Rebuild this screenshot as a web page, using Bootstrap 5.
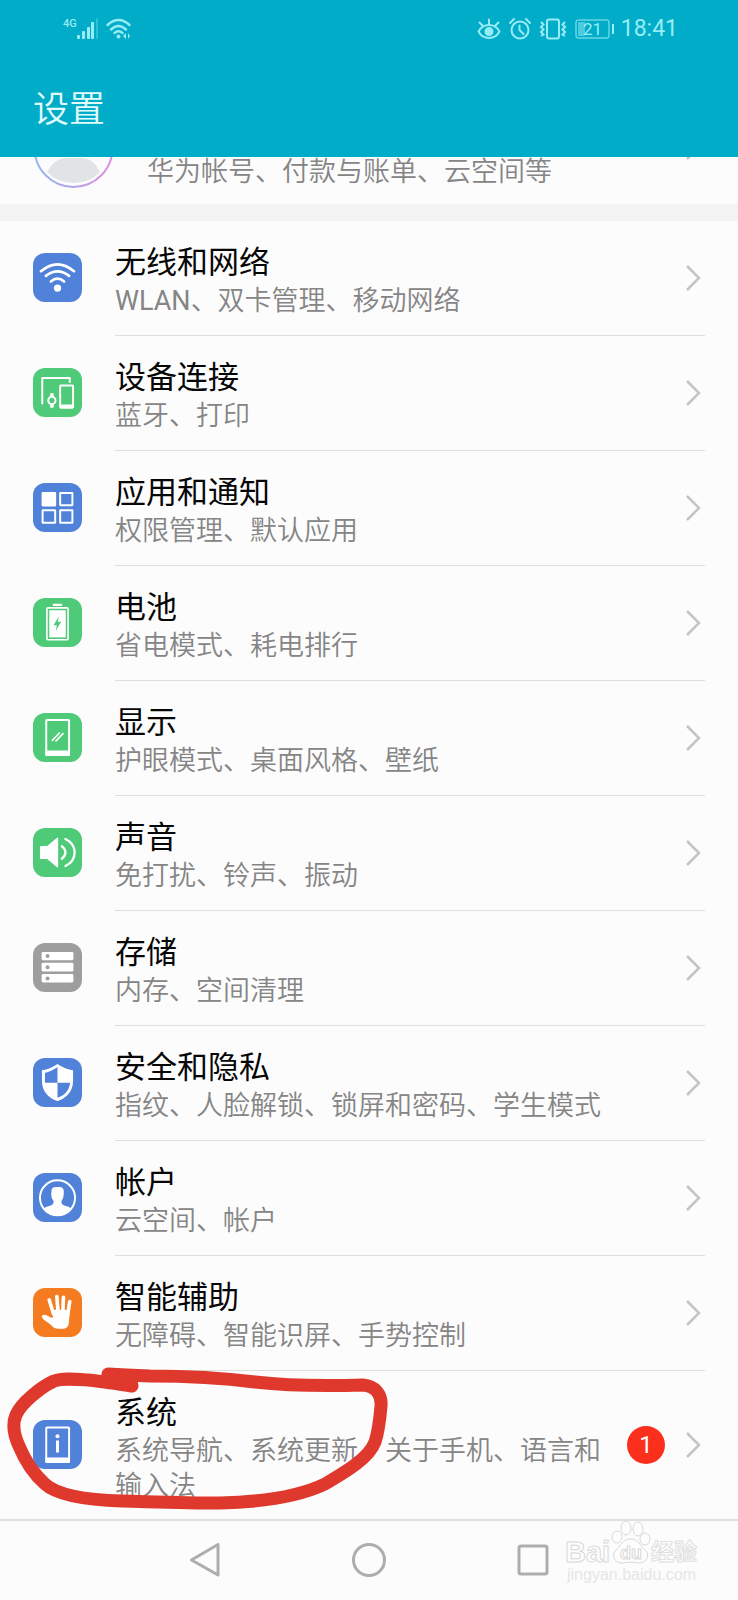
<!DOCTYPE html>
<html lang="zh-CN">
<head>
<meta charset="utf-8">
<meta name="viewport" content="width=device-width, initial-scale=1">
<title>设置</title>
<link href="https://cdn.jsdelivr.net/npm/bootstrap@5.3.0/dist/css/bootstrap.min.css" rel="stylesheet">
<style>
  body { background: #fcfcfc; color: #060606; font-family: Roboto, "Noto Sans CJK SC", sans-serif; }
  .page { min-height: 100vh; }
  .app-top { background: #00acc7; color: #e2fbfd; height: 157px; }
  .status { height: 58px; padding: 0 60px 0 63px; color: #98ecf5; }
  .status-net { font-size: 11px; line-height: 12px; font-weight: 500; margin-bottom: 10px; }
  .status-time { font-size: 23px; line-height: 24px; margin-left: 6px; }
  .app-title { font-size: 36px; line-height: 48px; font-weight: 350; padding: 28px 33px 0; }
  .account { height: 47px; padding: 0 33px 0 34px; }
  .sub { font-size: 27px; line-height: 35px; color: #858585; font-weight: 350; }
  .account .sub { line-height: 30px; margin: 0 auto 17px 33px; }
  .band { height: 17px; background: #f3f3f3; }
  .setting { padding: 0 33px 1px; gap: 33px; color: inherit; }
  .tile { width: 49px; height: 49px; border-radius: 12px; overflow: hidden; margin-bottom: 1px; }
  .tile svg { display: block; width: 100%; height: 100%; }
  .blue { background: #5082da; color: #5082da; }
  .green { background: #4fca78; color: #4fca78; }
  .grey { background: #9e9e9e; color: #9e9e9e; }
  .orange { background: #f47b20; color: #f47b20; }
  .setting-body { padding: 22px 0 16px; border-bottom: 1px solid #dedede; margin-bottom: -1px; min-width: 0; }
  .setting:last-child .setting-body { border-bottom-color: transparent; padding-bottom: 14px; }
  .setting-name { font-size: 31px; line-height: 40px; font-weight: 400; margin-bottom: 1px; }
  .count { width: 38px; height: 38px; background: #fb301c; font-size: 24px; font-weight: 400; margin: 0 20px 8px 16px; }
  .chev { width: 20px; height: 30px; margin-bottom: 6px; }
  .setting:last-child .chev { margin-bottom: 8px; }
  .ring { left: 0; top: -11px; width: 400px; height: 160px; pointer-events: none; }
  .nav-keys { border-top: 2px solid #dfdfdf; gap: 120px; height: 80px; }
  .key { width: 44px; height: 44px; background: none; }
  .mark-logo { right: 35px; top: -1px; width: 138px; height: 70px; pointer-events: none; }
</style>
</head>
<body>
<div class="page d-flex flex-column">
  <header class="app-top">
    <div class="status d-flex align-items-center">
      <span class="status-net">4G</span>
      <svg width="21" height="22" viewBox="0 0 21 22" fill="currentColor" aria-hidden="true"><rect x="0" y="17" width="3" height="4" rx="1"/><rect x="5" y="13" width="3" height="8" rx="1"/><rect x="10" y="9" width="3" height="12" rx="1"/><rect x="14" y="4" width="3" height="17" rx="1"/><rect x="19" y="0" width="3" height="21" rx="1" opacity=".3"/></svg>
      <svg class="ms-2" width="25" height="22" viewBox="0 0 25 22" fill="none" stroke="currentColor" stroke-width="2.4" stroke-linecap="round" aria-hidden="true"><path d="M1.500 7Q12.500-3 23.500 7M5 11.500Q12.500 4.500 20 11.500M8.500 15Q12.500 11.500 16.500 15"/><circle cx="12.500" cy="18.500" r="2" fill="currentColor" stroke="none"/><path d="M20 15v6l-3-3zM22 15v6l2-3z" fill="currentColor" stroke="none"/></svg>
      <svg class="ms-auto" width="24" height="22" viewBox="0 0 24 22" fill="none" stroke="currentColor" stroke-width="2" stroke-linecap="round" aria-hidden="true"><path d="M1.500 13.500Q5 7 12 7T22.500 13.500Q19 20 12 20T1.500 13.500zM12 7V1.500M6 8L2.500 4.500M18 8l3.500-3.500"/><circle cx="12" cy="13.500" r="3.500" fill="currentColor"/></svg>
      <svg class="ms-2" width="22" height="22" viewBox="0 0 22 22" fill="none" stroke="currentColor" stroke-width="2" stroke-linecap="round" aria-hidden="true"><circle cx="11" cy="12" r="8.500"/><path d="M10.500 7.500V12l4 4M1 5l4-4M21 5l-4-4"/></svg>
      <svg class="mx-2" width="28" height="22" viewBox="0 0 28 22" fill="none" stroke="currentColor" stroke-width="2" aria-hidden="true"><rect x="8" y="1.500" width="12" height="19" rx="2"/><path d="M2 4l2.500 2.500L2 9l2.500 2.500L2 14l2.500 2.500L2 18M26 4l-2.500 2.500L26 9l-2.500 2.500L26 14l-2.500 2.500L26 18"/></svg>
      <svg width="40" height="20" viewBox="0 0 40 20" aria-hidden="true"><rect x="1" y="1" width="33" height="18" rx="2" fill="none" stroke="currentColor"/><rect x="3" y="3" width="7" height="14" fill="currentColor" opacity=".5"/><rect x="37" y="5" width="2" height="10" fill="currentColor"/><text x="8" y="16" font-size="17" font-family="Roboto, sans-serif" fill="currentColor">21</text></svg>
      <span class="status-time">18:41</span>
    </div>
    <h1 class="app-title m-0">设置</h1>
  </header>

  <main>
    <a href="#account" class="account d-flex align-items-end overflow-hidden text-decoration-none">
      <svg class="align-self-start flex-shrink-0" width="80" height="32" viewBox="0 0 80 32" aria-hidden="true"><defs><linearGradient id="halo"><stop offset="0" stop-color="#8fbaf0"/><stop offset=".5" stop-color="#b4a4e6"/><stop offset="1" stop-color="#e48ae0"/></linearGradient></defs><path d="M13 15Q21 1 31 1H49Q59 1 66 15Q56 26 39.500 26Q23 26 13 15z" fill="#e0e4e7"/><circle cx="39.500" cy="-9" r="39" fill="none" stroke="url(#halo)" stroke-width="2"/></svg>
      <span class="sub">华为帐号、付款与账单、云空间等</span>
      <svg class="chev align-self-start" viewBox="0 0 20 30" fill="none" stroke="#c4c4c4" stroke-width="2.500" aria-hidden="true"><path d="M2 2l3-3"/></svg>
    </a>
    <div class="band"></div>

    <nav aria-label="设置">
      <a href="#wireless" class="setting d-flex align-items-center text-decoration-none">
        <span class="tile blue flex-shrink-0"><svg viewBox="0 0 148 148" fill="none" stroke="#fff" stroke-width="8" stroke-linecap="round"><path d="M24 55Q74 13 124 55M39 69Q74 42 109 69M54 86Q74 69 94 86"/><circle cx="74" cy="106" r="11" fill="#fff" stroke="none"/></svg></span>
        <span class="setting-body flex-grow-1 d-flex align-items-center"><span class="flex-grow-1"><span class="setting-name d-block">无线和网络</span><span class="sub d-block"><span class="fw-normal">WLAN</span>、双卡管理、移动网络</span></span><svg class="chev flex-shrink-0" viewBox="0 0 20 30" fill="none" stroke="#c4c4c4" stroke-width="2.500"><path d="M2 3l12 12L2 27"/></svg></span>
      </a>
      <a href="#devices" class="setting d-flex align-items-center text-decoration-none">
        <span class="tile green flex-shrink-0"><svg viewBox="0 0 148 148" fill="none" stroke="#fff" stroke-width="6"><path d="M28 107V30H111V42" stroke-linecap="round" stroke-linejoin="round"/><rect x="82" y="53" width="39" height="66" rx="2"/><path d="M82 116h39" stroke-width="12"/><circle cx="57" cy="98" r="11"/><path d="M52 87l1-10h8l1 10M52 109l1 10h8l1-10" fill="#fff" stroke-width="2"/></svg></span>
        <span class="setting-body flex-grow-1 d-flex align-items-center"><span class="flex-grow-1"><span class="setting-name d-block">设备连接</span><span class="sub d-block">蓝牙、打印</span></span><svg class="chev flex-shrink-0" viewBox="0 0 20 30" fill="none" stroke="#c4c4c4" stroke-width="2.500"><path d="M2 3l12 12L2 27"/></svg></span>
      </a>
      <a href="#apps" class="setting d-flex align-items-center text-decoration-none">
        <span class="tile blue flex-shrink-0"><svg viewBox="0 0 148 148" fill="none" stroke="#fff" stroke-width="6"><rect x="29" y="30" width="38" height="38" rx="1" fill="#fff"/><rect x="82" y="30" width="37" height="37" rx="1"/><rect x="29" y="82" width="38" height="38" rx="1"/><rect x="82" y="82" width="37" height="38" rx="1"/></svg></span>
        <span class="setting-body flex-grow-1 d-flex align-items-center"><span class="flex-grow-1"><span class="setting-name d-block">应用和通知</span><span class="sub d-block">权限管理、默认应用</span></span><svg class="chev flex-shrink-0" viewBox="0 0 20 30" fill="none" stroke="#c4c4c4" stroke-width="2.500"><path d="M2 3l12 12L2 27"/></svg></span>
      </a>
      <a href="#battery" class="setting d-flex align-items-center text-decoration-none">
        <span class="tile green flex-shrink-0"><svg viewBox="0 0 148 148"><rect x="60" y="17" width="28" height="7" rx="2" fill="#fff"/><rect x="42" y="30" width="64" height="96" rx="3" fill="none" stroke="#fff" stroke-width="5"/><rect x="49" y="37" width="50" height="82" fill="#fff"/><path d="M78 56L62 82h10l-3 17 16-27H75z" fill="currentColor"/></svg></span>
        <span class="setting-body flex-grow-1 d-flex align-items-center"><span class="flex-grow-1"><span class="setting-name d-block">电池</span><span class="sub d-block">省电模式、耗电排行</span></span><svg class="chev flex-shrink-0" viewBox="0 0 20 30" fill="none" stroke="#c4c4c4" stroke-width="2.500"><path d="M2 3l12 12L2 27"/></svg></span>
      </a>
      <a href="#display" class="setting d-flex align-items-center text-decoration-none">
        <span class="tile green flex-shrink-0"><svg viewBox="0 0 148 148" fill="none" stroke="#fff" stroke-width="6"><rect x="40" y="21" width="69" height="106" rx="2"/><path d="M38 121h73" stroke-width="16"/><path d="M57 84L81 59M68 86L92 61" stroke-width="5"/></svg></span>
        <span class="setting-body flex-grow-1 d-flex align-items-center"><span class="flex-grow-1"><span class="setting-name d-block">显示</span><span class="sub d-block">护眼模式、桌面风格、壁纸</span></span><svg class="chev flex-shrink-0" viewBox="0 0 20 30" fill="none" stroke="#c4c4c4" stroke-width="2.500"><path d="M2 3l12 12L2 27"/></svg></span>
      </a>
      <a href="#sound" class="setting d-flex align-items-center text-decoration-none">
        <span class="tile green flex-shrink-0"><svg viewBox="0 0 148 148" fill="none" stroke="#fff" stroke-width="7" stroke-linecap="round"><path d="M23 56H44L74 31V117L44 92H23z" fill="#fff" stroke-width="4" stroke-linejoin="round"/><path d="M87 55Q109 74 87 93M98 33C135 51 135 97 98 115"/></svg></span>
        <span class="setting-body flex-grow-1 d-flex align-items-center"><span class="flex-grow-1"><span class="setting-name d-block">声音</span><span class="sub d-block">免打扰、铃声、振动</span></span><svg class="chev flex-shrink-0" viewBox="0 0 20 30" fill="none" stroke="#c4c4c4" stroke-width="2.500"><path d="M2 3l12 12L2 27"/></svg></span>
      </a>
      <a href="#storage" class="setting d-flex align-items-center text-decoration-none">
        <span class="tile grey flex-shrink-0"><svg viewBox="0 0 148 148" fill="#fff"><rect x="26" y="27" width="96" height="25" rx="4"/><rect x="26" y="60" width="96" height="26" rx="4"/><rect x="26" y="94" width="96" height="25" rx="4"/><g fill="currentColor"><circle cx="44" cy="39" r="6"/><circle cx="44" cy="73" r="6"/><circle cx="44" cy="107" r="6"/></g></svg></span>
        <span class="setting-body flex-grow-1 d-flex align-items-center"><span class="flex-grow-1"><span class="setting-name d-block">存储</span><span class="sub d-block">内存、空间清理</span></span><svg class="chev flex-shrink-0" viewBox="0 0 20 30" fill="none" stroke="#c4c4c4" stroke-width="2.500"><path d="M2 3l12 12L2 27"/></svg></span>
      </a>
      <a href="#security" class="setting d-flex align-items-center text-decoration-none">
        <span class="tile blue flex-shrink-0"><svg viewBox="0 0 148 148"><path d="M74 18Q97 34 121 37V70C121 102 98 123 74 130C50 123 27 102 27 70V37Q51 34 74 18z" fill="#fff"/><path d="M74 28V75H36V45Q56 40 74 28zM74 75H112C110 98 94 115 74 120z" fill="currentColor"/></svg></span>
        <span class="setting-body flex-grow-1 d-flex align-items-center"><span class="flex-grow-1"><span class="setting-name d-block">安全和隐私</span><span class="sub d-block">指纹、人脸解锁、锁屏和密码、学生模式</span></span><svg class="chev flex-shrink-0" viewBox="0 0 20 30" fill="none" stroke="#c4c4c4" stroke-width="2.500"><path d="M2 3l12 12L2 27"/></svg></span>
      </a>
      <a href="#users" class="setting d-flex align-items-center text-decoration-none">
        <span class="tile blue flex-shrink-0"><svg viewBox="0 0 148 148"><circle cx="74" cy="75" r="53" fill="none" stroke="#fff" stroke-width="6"/><path d="M56 52Q57 42 70 42H80Q92 42 93 54V65Q92 78 86 85Q85 94 94 98Q108 101 117 107Q101 129 74 129Q47 129 31 107Q40 101 54 98Q63 94 62 85Q55 77 55 65z" fill="#fff"/></svg></span>
        <span class="setting-body flex-grow-1 d-flex align-items-center"><span class="flex-grow-1"><span class="setting-name d-block">帐户</span><span class="sub d-block">云空间、帐户</span></span><svg class="chev flex-shrink-0" viewBox="0 0 20 30" fill="none" stroke="#c4c4c4" stroke-width="2.500"><path d="M2 3l12 12L2 27"/></svg></span>
      </a>
      <a href="#assist" class="setting d-flex align-items-center text-decoration-none">
        <span class="tile orange flex-shrink-0"><svg viewBox="0 0 148 148" fill="none" stroke="#fff" stroke-width="11" stroke-linecap="round"><path d="M49 36L62 78M72 26L76 76M92 28L90 76M111 41L105 80"/><path d="M57 72Q60 64 72 66H100L111 74L108 108Q105 123 90 123H76Q64 123 56 113L46 105Q27 94 26 84Q35 77 48 86Q60 94 61 86z" fill="#fff" stroke="none"/></svg></span>
        <span class="setting-body flex-grow-1 d-flex align-items-center"><span class="flex-grow-1"><span class="setting-name d-block">智能辅助</span><span class="sub d-block">无障碍、智能识屏、手势控制</span></span><svg class="chev flex-shrink-0" viewBox="0 0 20 30" fill="none" stroke="#c4c4c4" stroke-width="2.500"><path d="M2 3l12 12L2 27"/></svg></span>
      </a>
      <a href="#system" class="setting d-flex align-items-center text-decoration-none position-relative">
        <span class="tile blue flex-shrink-0"><svg viewBox="0 0 148 148" fill="none" stroke="#fff" stroke-width="6"><rect x="40" y="23" width="69" height="104" rx="2"/><path d="M38 121h73" stroke-width="15"/><path d="M74 62V98" stroke-width="9"/><circle cx="74" cy="49" r="6" fill="#fff" stroke="none"/></svg></span>
        <span class="setting-body flex-grow-1 d-flex align-items-center"><span class="flex-grow-1"><span class="setting-name d-block">系统</span><span class="sub d-block">系统导航、系统更新、关于手机、语言和输入法</span></span><span class="count badge rounded-circle p-0 d-flex align-items-center justify-content-center flex-shrink-0">1</span><svg class="chev flex-shrink-0" viewBox="0 0 20 30" fill="none" stroke="#c4c4c4" stroke-width="2.500"><path d="M2 3l12 12L2 27"/></svg></span>
        <!-- hand-drawn marker loop around the entry -->
        <svg class="ring position-absolute" viewBox="0 0 400 160" fill="none" stroke="#df382c" stroke-width="13" stroke-linecap="round" stroke-linejoin="round" aria-hidden="true"><path d="M132 26C118 24 100 21 88 20C74 19 62 18 54 21C41 27 21 43 16 55C12 64 14 75 19 86C26 103 36 116 45 124C58 136 88 140 122 141C160 142 185 143 220 143C262 142 300 136 325 124C347 111 369 98 375 82C379 70 380 58 381 46C382 34 375 26 363 25C330 26 290 26 255 22C215 17 185 16 150 16Q125 15 108 14"/><path d="M108 14L132 24" stroke-width="12"/></svg>
      </a>
    </nav>
  </main>

  <footer class="nav-keys d-flex align-items-center justify-content-center position-relative">
    <button type="button" class="key border-0 p-0" aria-label="返回"><svg width="44" height="44" viewBox="0 0 44 44" fill="none" stroke="#adadad" stroke-width="3" stroke-linejoin="round"><path d="M35 6.500V37L8.500 22z"/></svg></button>
    <button type="button" class="key border-0 p-0" aria-label="主屏幕"><svg width="44" height="44" viewBox="0 0 44 44" fill="none" stroke="#adadad" stroke-width="3"><circle cx="22" cy="22" r="15.500"/></svg></button>
    <button type="button" class="key border-0 p-0" aria-label="最近任务"><svg width="44" height="44" viewBox="0 0 44 44" fill="none" stroke="#adadad" stroke-width="3"><rect x="8" y="8" width="28" height="28" rx="2"/></svg></button>
    <svg class="mark-logo position-absolute" viewBox="0 0 138 70" fill="#fdfdfd" stroke="#d9d9d9" stroke-width="1">
      <g font-family="'Liberation Sans', 'Noto Sans CJK SC', sans-serif" font-weight="700">
        <text x="0" y="42" font-size="29">Bai</text>
        <text x="86" y="40" font-size="23" stroke="#e0e0e0" font-family="'Noto Sans CJK SC', sans-serif">经验</text>
        <text x="2" y="60" font-size="16" font-weight="400" fill="#e6e6e6" stroke="none">jingyan.baidu.com</text>
      </g>
      <ellipse cx="52" cy="17" rx="5" ry="6"/><ellipse cx="61" cy="8" rx="5" ry="7"/><ellipse cx="73" cy="9" rx="5" ry="7"/><ellipse cx="80" cy="19" rx="5" ry="6"/>
      <path d="M66 19C57 19 56 26 51 30C46 35 49 43 57 43Q66 41 75 43C83 42 85 34 80 30C75 26 74 19 66 19z"/>
      <text x="55" y="39" font-size="18" font-family="'Liberation Sans', sans-serif" font-weight="700">du</text>
    </svg>
  </footer>
</div>
<script src="https://cdn.jsdelivr.net/npm/bootstrap@5.3.0/dist/js/bootstrap.bundle.min.js"></script>
</body>
</html>
